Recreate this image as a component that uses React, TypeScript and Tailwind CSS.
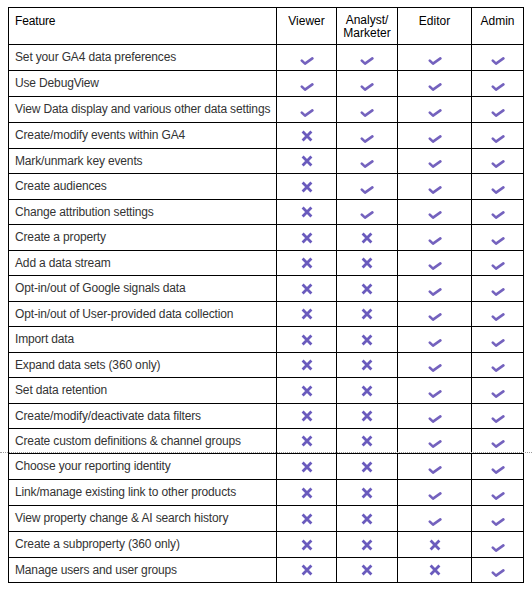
import React from "react";

type V = 0 | 1;
const rows: [string, V, V, V, V, number][] = [
  ["Set your GA4 data preferences", 1, 1, 1, 1, 26],
  ["Use DebugView", 1, 1, 1, 1, 26],
  ["View Data display and various other data settings", 1, 1, 1, 1, 26],
  ["Create/modify events within GA4", 0, 1, 1, 1, 26],
  ["Mark/unmark key events", 0, 1, 1, 1, 25],
  ["Create audiences", 0, 1, 1, 1, 26],
  ["Change attribution settings", 0, 1, 1, 1, 25],
  ["Create a property", 0, 0, 1, 1, 26],
  ["Add a data stream", 0, 0, 1, 1, 25],
  ["Opt-in/out of Google signals data", 0, 0, 1, 1, 26],
  ["Opt-in/out of User-provided data collection", 0, 0, 1, 1, 25],
  ["Import data", 0, 0, 1, 1, 26],
  ["Expand data sets (360 only)", 0, 0, 1, 1, 25],
  ["Set data retention", 0, 0, 1, 1, 26],
  ["Create/modify/deactivate data filters", 0, 0, 1, 1, 25],
  ["Create custom definitions & channel groups", 0, 0, 1, 1, 25],
  ["Choose your reporting identity", 0, 0, 1, 1, 26],
  ["Link/manage existing link to other products", 0, 0, 1, 1, 26],
  ["View property change & AI search history", 0, 0, 1, 1, 26],
  ["Create a subproperty (360 only)", 0, 0, 0, 1, 26],
  ["Manage users and user groups", 0, 0, 0, 1, 25],
];

const Check = () => (
  <svg width="14" height="14" viewBox="0 0 14 14" className="block">
    <path
      d="M1.8 9.6 L5 12.6 L12.4 7.4"
      fill="none"
      stroke="#7462be"
      strokeWidth="2.6"
      strokeLinecap="round"
      strokeLinejoin="round"
    />
  </svg>
);

const Cross = () => (
  <svg width="12" height="12" viewBox="0 0 12 12" className="block">
    <path
      d="M1.6 1.6 L10.4 10.4 M10.4 1.6 L1.6 10.4"
      fill="none"
      stroke="#6a5bbd"
      strokeWidth="2.8"
      strokeLinecap="butt"
    />
  </svg>
);

const cols = "grid grid-cols-[268px_60px_61px_74px_52px]";

export default function App() {
  return (
    <div
      className="relative w-[532px] h-[592px] bg-white"
      style={{ fontFamily: '"Liberation Sans", Arial, sans-serif' }}
    >
      <div className="pt-[7px] pl-[8px]">
        <div className="w-[516px] border-l border-t border-black text-[12px] leading-[14px]">
          <div className={`${cols} h-[37px]`}>
            <div className="border-r border-b border-black pl-[6px] pt-[6px] text-black tracking-[-0.15px]">Feature</div>
            <div className="border-r border-b border-black pt-[6px] text-center text-black">Viewer</div>
            <div className="border-r border-b border-black pt-[6px] text-center text-black leading-[13px]">
              Analyst/
              <br />
              Marketer
            </div>
            <div className="border-r border-b border-black pt-[6px] text-center text-black">Editor</div>
            <div className="border-r border-b border-black pt-[6px] text-center text-black">Admin</div>
          </div>
          {rows.map(([label, a, b, c, d, h], i) => (
            <div
              key={i}
              className={`${cols} ${h === 26 ? "h-[26px]" : "h-[25px]"}`}
            >
              <div className="border-r border-b border-black pl-[6px] pt-[5px] text-[#333333] whitespace-nowrap tracking-[-0.15px]">
                {label}
              </div>
              {[a, b, c, d].map((v, j) => (
                <div
                  key={j}
                  className="border-r border-b border-black flex items-center justify-center"
                >
                  {v ? <Check /> : <Cross />}
                </div>
              ))}
            </div>
          ))}
        </div>
      </div>
      <div className="absolute left-0 right-0 top-[452px] border-t border-dotted border-[#9a9a9a]" />
    </div>
  );
}
